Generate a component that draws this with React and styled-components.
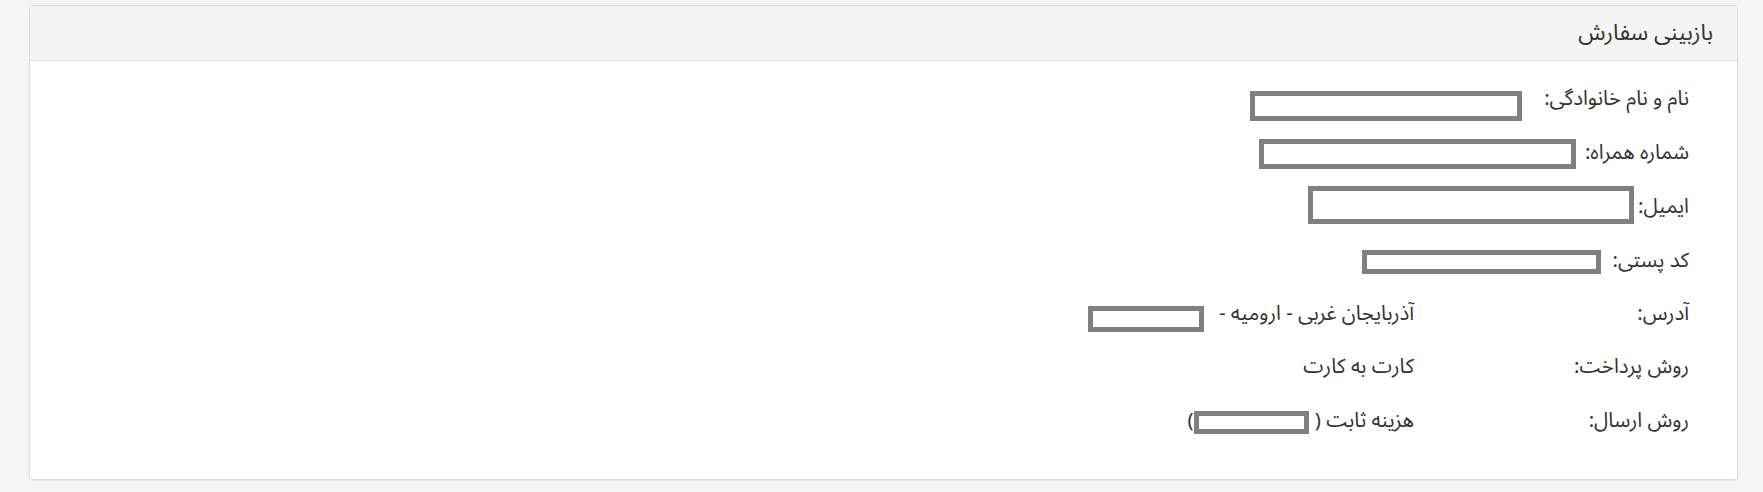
import React from "react";
import styled, { createGlobalStyle } from "styled-components";

const Global = createGlobalStyle`
  html, body {
    margin: 0;
    padding: 0;
    background: #f5f5f5;
  }
  body {
    font-family: "Noto Sans Arabic", "DejaVu Sans", "Noto Sans", sans-serif;
    color: #333;
  }
`;

const Page = styled.div`
  padding: 5px 25px 11px 29px;
`;

const Panel = styled.section`
  direction: rtl;
  background: #fff;
  border: 1px solid #dcdcdc;
  border-radius: 4px;
  box-shadow: 0 1px 1px rgba(0, 0, 0, 0.05);
  overflow: hidden;
`;

const Heading = styled.header`
  height: 54px;
  display: flex;
  align-items: center;
  padding: 0 24px;
  background: #f4f4f4;
  border-bottom: 1px solid #ddd;
`;

const Title = styled.h3`
  margin: 0;
  font-size: 22.5px;
  font-weight: 400;
  color: #333;
  line-height: 1;
`;

const Body = styled.div`
  padding: 10px 48px 31px 48px;
`;

const Row = styled.div`
  display: flex;
  align-items: center;
  height: ${(p) => p.$h || 54}px;
  font-size: 20.5px;
`;

const Label = styled.span`
  white-space: nowrap;
  ${(p) => (p.$col ? `width: ${p.$col}px; flex: none;` : "")}
`;

const Value = styled.span`
  display: flex;
  align-items: center;
  white-space: nowrap;
`;

const Redacted = styled.span`
  display: inline-block;
  box-sizing: border-box;
  width: ${(p) => p.$w}px;
  height: ${(p) => p.$h}px;
  border: 5px solid #808080;
  background: #fff;
  margin-top: ${(p) => p.$dy || 0}px;
  margin-right: ${(p) => p.$gap || 0}px;
  flex: none;
`;

const fields = [
  { label: "نام و نام خانوادگی:", w: 272, h: 30, dy: 16, gap: 22 },
  { label: "شماره همراه:", w: 317, h: 30, dy: 3, gap: 9 },
  { label: "ایمیل:", w: 326, h: 38, dy: -2, gap: 4 },
  { label: "کد پستی:", w: 239, h: 24, dy: 3, gap: 12 },
];

export default function App() {
  return (
    <>
      <Global />
      <Page>
        <Panel dir="rtl">
          <Heading>
            <Title>بازبینی سفارش</Title>
          </Heading>
          <Body>
            {fields.map((f) => (
              <Row key={f.label}>
                <Label>{f.label}</Label>
                <Redacted $w={f.w} $h={f.h} $dy={f.dy} $gap={f.gap} />
              </Row>
            ))}
            <Row $h={53}>
              <Label $col={275}>آدرس:</Label>
              <Value>
                آذربایجان غربی - ارومیه -
                <Redacted $w={116} $h={26} $dy={10} $gap={15} />
              </Value>
            </Row>
            <Row $h={53}>
              <Label $col={275}>روش پرداخت:</Label>
              <Value>کارت به کارت</Value>
            </Row>
            <Row $h={55}>
              <Label $col={275}>روش ارسال:</Label>
              <Value>
                هزینه ثابت (
                <Redacted $w={115} $h={23} $dy={3} $gap={6} />
                )
              </Value>
            </Row>
          </Body>
        </Panel>
      </Page>
    </>
  );
}
